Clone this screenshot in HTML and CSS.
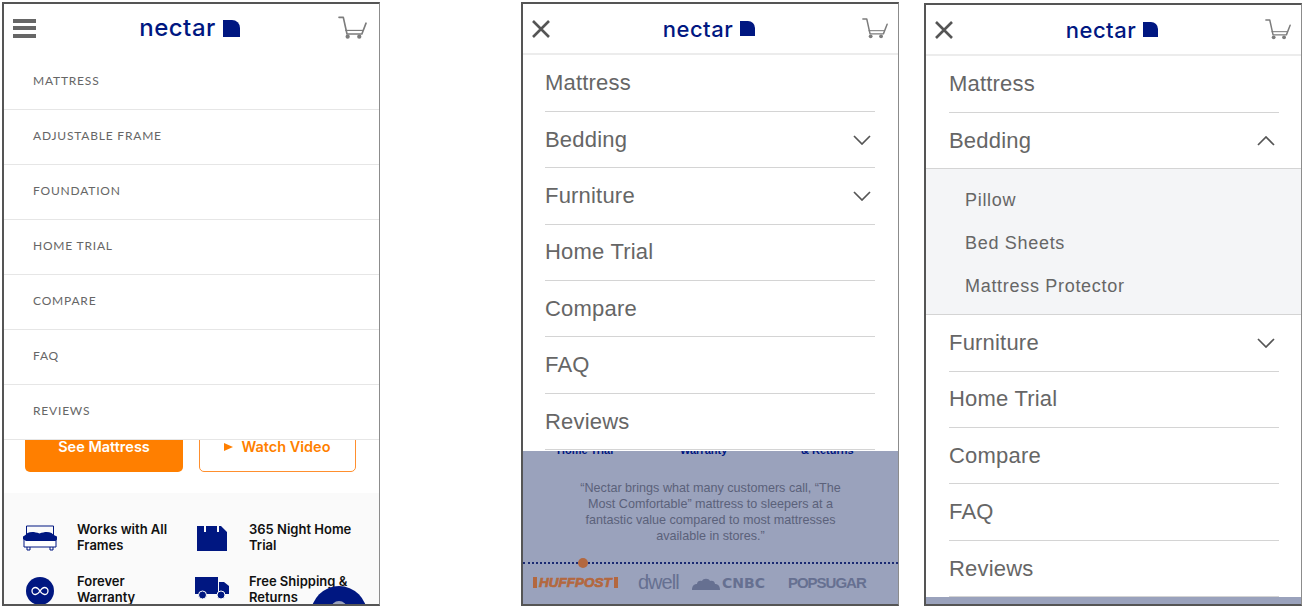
FILE: index.html
```html
<!doctype html>
<html lang="en">
  <head>
    <meta charset="UTF-8" />
    <meta name="viewport" content="width=device-width, initial-scale=1.0" />
    <title>Nectar mobile menu</title>
    <link rel="stylesheet" href="styles.css">
  </head>
  <body>
    <svg class="defs" width="0" height="0">
      <symbol id="cart" viewBox="0 0 30 24">
        <path d="M1 1h4.5l3.8 17.2h15.4L29 7" fill="none" stroke="#7c7c7c" stroke-width="1.7" stroke-linecap="round" stroke-linejoin="round" />
        <path d="M7.5 14.5h19" fill="none" stroke="#7c7c7c" stroke-width="1.200" />
        <circle cx="10" cy="21" r="2.200" fill="#7c7c7c" />
        <circle cx="22" cy="21" r="2.200" fill="#7c7c7c" />
      </symbol>
      <symbol id="mark" viewBox="0 0 17 17">
        <path d="M0 0h9a8 8 0 0 1 8 8v9H0z" fill="#001781" />
      </symbol>
      <symbol id="close" viewBox="0 0 20 18">
        <path d="M2 1l16 16M18 1L2 17" fill="none" stroke="#555" stroke-width="2.6" />
      </symbol>
      <symbol id="down" viewBox="0 0 18 10">
        <path d="M1 1l8 8 8-8" fill="none" stroke="#555" stroke-width="1.7" />
      </symbol>
      <symbol id="up" viewBox="0 0 18 10">
        <path d="M1 9l8-8 8 8" fill="none" stroke="#555" stroke-width="1.7" />
      </symbol>
    </svg>

    <main class="screens">
      <!-- closed menu -->
      <section class="phone">
        <header class="topbar topbar-main">
          <div class="burger"><span></span><span></span><span></span></div>
          <div class="logo logo-big">
            <span>nectar</span>
            <svg class="mark"><use href="#mark" /></svg>
          </div>
          <svg class="cart cart-big"><use href="#cart" /></svg>
        </header>
        <nav class="caps-menu">
          <a>Mattress</a>
          <a>Adjustable Frame</a>
          <a>Foundation</a>
          <a>Home Trial</a>
          <a>Compare</a>
          <a>FAQ</a>
          <a>Reviews</a>
        </nav>
        <div class="cta">
          <a class="btn btn-solid">See Mattress</a>
          <a class="btn btn-outline"><i class="play"></i>Watch Video</a>
        </div>
        <div class="features">
          <div class="feature">
            <div class="feature-icon">
              <svg width="34" height="26" viewBox="0 0 34 26">
                <path d="M3.5 10V1h27v9" fill="none" stroke="#001781" stroke-width="1" />
                <path d="M1 14h32v8H1z" fill="#fff" stroke="#001781" stroke-width="1" />
                <path d="M0 11.5c2-1 3-2 4.500-3.500 3-1.500 7-1.500 12 .5 5-2 9-2 12-.500 1.500 1.500 3 2.500 5.500 3.500v3l-1.500 1.500H3l-3-2z" fill="#001781" />
                <path d="M4 22v3h3v-3M27 22v3h3v-3" fill="none" stroke="#001781" stroke-width="1" />
              </svg>
            </div>
            <p>Works with All Frames</p>
          </div>
          <div class="feature">
            <div class="feature-icon">
              <svg width="30" height="26" viewBox="0 0 30 26">
                <path d="M0 1h7v6h2V1h11v6h2V1h2l6 6v19H0z" fill="#001781" />
              </svg>
            </div>
            <p>365 Night Home Trial</p>
          </div>
          <div class="feature">
            <div class="feature-icon">
              <svg width="28" height="28" viewBox="0 0 28 28">
                <circle cx="14" cy="14" r="14" fill="#001781" />
                <path d="M14 14c-2-3-3-3.500-4.500-3.500a3.500 3.500 0 0 0 0 7c1.500 0 2.500-.5 4.500-3.500s3-3.500 4.500-3.500a3.500 3.500 0 0 1 0 7c-1.500 0-2.500-.5-4.500-3.500z" fill="none" stroke="#fff" stroke-width="1.300" />
              </svg>
            </div>
            <p>Forever Warranty</p>
          </div>
          <div class="feature">
            <div class="feature-icon">
              <svg width="34" height="23" viewBox="0 0 34 23">
                <path d="M0 0h23v17H0zM24 5h5l5 4v8H24z" fill="#001781" />
                <circle cx="7.500" cy="18" r="4" fill="#001781" stroke="#fafafa" stroke-width="1" />
                <circle cx="26" cy="18" r="4" fill="#001781" stroke="#fafafa" stroke-width="1" />
              </svg>
            </div>
            <p>Free Shipping &amp; Returns</p>
          </div>
        </div>
        <div class="chat-bubble"><span></span></div>
      </section>

      <!-- open menu over the dimmed page -->
      <section class="phone phone-open">
        <header class="topbar topbar-open">
          <svg class="close"><use href="#close" /></svg>
          <div class="logo">
            <span>nectar</span>
            <svg class="mark"><use href="#mark" /></svg>
          </div>
          <svg class="cart"><use href="#cart" /></svg>
        </header>
        <nav class="big-menu big-menu-first">
          <a>Mattress</a>
          <a>Bedding<svg class="chevron"><use href="#down" /></svg></a>
          <a>Furniture<svg class="chevron"><use href="#down" /></svg></a>
          <a>Home Trial</a>
          <a>Compare</a>
          <a>FAQ</a>
          <a>Reviews</a>
        </nav>
        <div class="dim">
          <div class="dim-cut">
            <span>Home Trial</span>
            <span>Warranty</span>
            <span>&amp; Returns</span>
          </div>
          <p class="quote">“Nectar brings what many customers call, “The Most Comfortable” mattress to sleepers at a fantastic value compared to most mattresses available in stores.”</p>
          <div class="dots"><i></i></div>
          <div class="press">
            <span class="huff"><b></b>HUFFPOST<b></b></span>
            <span class="dwell">dwell</span>
            <span class="cnbc">
              <svg width="28" height="14" viewBox="0 0 28 14">
                <path d="M0 14c0-4 2-6 5-6 0-3 3-4 5-3 1-3 7-3 8 0 2-1 5 0 5 3 3 0 5 2 5 6z" fill="#667091" />
              </svg>
              CNBC
            </span>
            <span class="popsugar">POPSUGAR</span>
          </div>
        </div>
      </section>

      <!-- bedding expanded -->
      <section class="phone phone-open phone-low">
        <header class="topbar topbar-open">
          <svg class="close"><use href="#close" /></svg>
          <div class="logo">
            <span>nectar</span>
            <svg class="mark"><use href="#mark" /></svg>
          </div>
          <svg class="cart"><use href="#cart" /></svg>
        </header>
        <nav class="big-menu big-menu-last">
          <a>Mattress</a>
          <a class="is-open">Bedding<svg class="chevron"><use href="#up" /></svg></a>
          <div class="submenu">
            <a>Pillow</a>
            <a>Bed Sheets</a>
            <a>Mattress Protector</a>
          </div>
          <a>Furniture<svg class="chevron"><use href="#down" /></svg></a>
          <a>Home Trial</a>
          <a>Compare</a>
          <a>FAQ</a>
          <a>Reviews</a>
        </nav>
        <div class="dim"></div>
      </section>
    </main>
  </body>
</html>
```

FILE: styles.css
```css
* {
  box-sizing: border-box;
}
body {
  margin: 0;
  background: #fff;
  font-family: "Liberation Sans", Arial, sans-serif;
}
.defs {
  position: absolute;
}
.screens {
  display: flex;
  align-items: flex-start;
  gap: 141px;
  width: 1302px;
  height: 610px;
  padding: 2px 0 0 2px;
  overflow: hidden;
}
.phone {
  position: relative;
  display: flex;
  flex-direction: column;
  flex: none;
  width: 378px;
  height: 604px;
  border: 2px solid #555;
  border-right-width: 1px;
  border-right-color: #8c8c8c;
  overflow: hidden;
  background: #fff;
}
.phone-low {
  height: 603px;
  margin: 1px 0 0 -116px;
}

/* top bars */
.topbar {
  display: flex;
  align-items: center;
  justify-content: space-between;
  flex: none;
}
.topbar-main {
  height: 51px;
  padding: 0 12px 3px 9px;
}
.topbar-open {
  height: 51px;
  padding: 0 10px 0 8px;
  border-bottom: 2px solid #ececec;
}
.burger {
  display: flex;
  flex-direction: column;
  gap: 3.500px;
  width: 23px;
}
.burger span {
  height: 4px;
  background: #666;
}
.logo {
  display: flex;
  align-items: center;
  gap: 7px;
  margin-left: 5px;
  color: #001781;
  font-family: Inter, sans-serif;
  font-size: 22px;
  font-weight: 550;
  letter-spacing: 0.5px;
  line-height: 24px;
}
.logo .mark {
  width: 15px;
  height: 15px;
}
.logo-big {
  margin-left: 5px;
  font-size: 24px;
  gap: 7px;
}
.logo-big .mark {
  width: 17px;
  height: 17px;
}
.cart {
  width: 26px;
  height: 21px;
}
.cart-big {
  width: 29px;
  height: 24px;
}
.close {
  width: 20px;
  height: 18px;
}

/* closed menu */
.caps-menu {
  position: relative;
  z-index: 1;
  flex: none;
  background: #fff;
}
.caps-menu a {
  display: flex;
  align-items: center;
  height: 55px;
  padding: 0 0 3px 29px;
  border-bottom: 1px solid #e6e6e6;
  color: #666;
  font-family: Lato, sans-serif;
  font-size: 12px;
  letter-spacing: 0.800px;
  text-transform: uppercase;
}
.cta {
  display: flex;
  gap: 16px;
  flex: none;
  height: 54px;
  margin-top: -19px;
  padding-left: 21px;
}
.btn {
  display: flex;
  align-items: center;
  justify-content: center;
  width: 158px;
  height: 51px;
  border-radius: 5px;
  font-family: Inter, sans-serif;
  font-size: 14.500px;
  font-weight: 600;
}
.btn-solid {
  background: #ff7f00;
  color: #fff;
}
.btn-outline {
  width: 157px;
  border: 1px solid #ff8f2e;
  color: #ff7f00;
}
.play {
  width: 0;
  height: 0;
  margin-right: 8px;
  border-left: 9px solid #ff7f00;
  border-top: 4.500px solid transparent;
  border-bottom: 4.500px solid transparent;
}
.features {
  display: grid;
  grid-template-columns: 172px 172px;
  grid-auto-rows: 52px;
  flex: 1;
  margin-top: 18px;
  padding: 28px 0 0 19px;
  background: #fafafa;
}
.feature {
  display: flex;
  gap: 20px;
}
.feature-icon {
  display: flex;
  justify-content: center;
  flex: none;
  width: 34px;
  padding-top: 4px;
}
.feature p {
  width: 106px;
  margin: 0;
  color: #111;
  font-family: Inter, sans-serif;
  font-size: 13px;
  font-weight: 600;
  line-height: 16px;
}
.chat-bubble {
  position: absolute;
  left: 307px;
  top: 582px;
  width: 56px;
  height: 56px;
  border-radius: 50%;
  background: #001781;
}
.chat-bubble span {
  position: absolute;
  left: 20px;
  top: 15px;
  width: 16px;
  height: 16px;
  border-radius: 50%;
  background: #9aa2bc;
}

/* open menu */
.big-menu {
  position: relative;
  z-index: 1;
  flex: none;
  padding: 0 23px 0 22px;
  background: #fff;
}
.big-menu-first {
  padding-top: 0.500px;
  padding-bottom: 0.700px;
}
.big-menu-last {
  margin-top: 0.500px;
  padding-left: 23px;
  padding-right: 22px;
}
.big-menu a {
  display: flex;
  align-items: center;
  justify-content: space-between;
  height: 56.4px;
  padding-right: 4px;
  border-bottom: 1px solid #d4d4d4;
  color: #666;
  font-size: 22px;
  letter-spacing: 0.200px;
}
.big-menu a.is-open {
  margin: 0 -22px 0 -23px;
  padding: 0 26px 0 23px;
}
.chevron {
  width: 18px;
  height: 10px;
}
.submenu {
  height: 146px;
  margin: 0 -22px 0 -23px;
  padding: 10px 0 0 39px;
  border-bottom: 1px solid #d4d4d4;
  background: #f4f5f7;
}
.big-menu .submenu a {
  height: 43px;
  border: 0;
  font-size: 18px;
  letter-spacing: 0.700px;
}
.dim {
  flex: 1;
  background: #9aa2bc;
  overflow: hidden;
}
.dim-cut {
  height: 6px;
  position: relative;
  overflow: hidden;
  color: #001781;
  font-size: 11px;
  font-weight: 700;
}
.dim-cut span {
  position: absolute;
  bottom: 0;
  line-height: 14px;
  white-space: nowrap;
}
.dim-cut span:nth-child(1) {
  left: 34px;
}
.dim-cut span:nth-child(2) {
  left: 157px;
}
.dim-cut span:nth-child(3) {
  left: 278px;
}
.quote {
  width: 290px;
  margin: 23px auto 0;
  color: #5b617a;
  font-size: 12.600px;
  line-height: 16px;
  text-align: center;
}
.dots {
  position: relative;
  height: 2px;
  margin-top: 18px;
  border-top: 2px dotted #1a2a72;
}
.dots i {
  position: absolute;
  left: 55px;
  top: -6px;
  width: 10px;
  height: 10px;
  border-radius: 50%;
  background: #b3683f;
}
.press {
  display: flex;
  align-items: center;
  height: 24px;
  margin-top: 7px;
  padding-left: 10px;
  color: #667091;
}
.huff {
  display: flex;
  align-items: center;
  gap: 2px;
  width: 86px;
  color: #b3683f;
  font-size: 13.500px;
  font-style: italic;
  font-weight: 700;
  -webkit-text-stroke: 0.7px #b3683f;
}
.huff b {
  width: 4px;
  height: 11px;
  background: #b3683f;
}
.dwell {
  margin-left: 19px;
  width: 38px;
  font-size: 20px;
  letter-spacing: -1px;
}
.cnbc {
  display: flex;
  align-items: center;
  gap: 2px;
  margin-left: 16px;
  font-family: "DejaVu Sans", sans-serif;
  font-size: 14px;
  font-weight: 700;
}
.popsugar {
  margin-left: 23px;
  font-size: 15px;
  font-weight: 700;
  letter-spacing: -1px;
}
```
